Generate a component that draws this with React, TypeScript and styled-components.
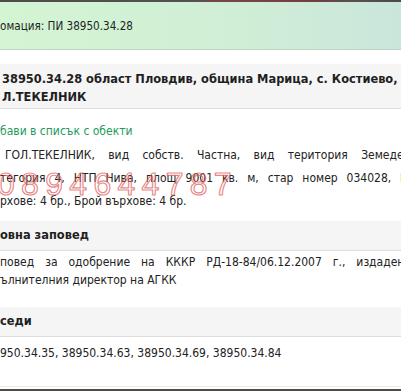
import React from "react";
import styled, { createGlobalStyle } from "styled-components";

const GlobalStyle = createGlobalStyle`
  html, body { margin: 0; padding: 0; background: #fff; overflow: hidden; }
  body { font-family: "DejaVu Sans Condensed", "Noto Sans", sans-serif; color: #1f1f1f; }
`;

const Frame = styled.div`
  position: relative;
  width: 401px;
  height: 391px;
  display: flex;
  flex-direction: column;
  overflow: hidden;
  background: #fff;
`;

const TopRule = styled.div`
  flex: none;
  height: 2px;
  background: linear-gradient(90deg, #514c4c 0%, #555050 48%, #7b4545 55%, #6e4040 80%, #585050 88%, #4e4a4a 100%);
`;

const Header = styled.header`
  flex: none;
  height: 47px;
  display: flex;
  align-items: center;
  background: linear-gradient(90deg, #d4f5d3 0%, #cfeed6 60%, #cae6dc 100%);
  border-bottom: 1px solid #bcd6c4;
  font-size: 11.6px;
  color: #222;
  white-space: nowrap;
`;

const Body = styled.main`
  flex: 1;
  display: flex;
  flex-direction: column;
  padding-top: 14px;
  font-size: 12px;
`;

const TitleBox = styled.div`
  padding: 6px 0 2px 2px;
  line-height: 18px;
  font-size: 12.7px;
  font-weight: bold;
  background: #f5f5f5;
  border-bottom: 1px solid #dedede;
  white-space: nowrap;
`;

const SectionBox = styled.div<{ $gap: number }>`
  margin-top: ${(p) => p.$gap}px;
  padding: 5px 0 6px;
  line-height: 18px;
  font-size: 12.7px;
  font-weight: bold;
  background: #f5f5f5;
  border-bottom: 1px solid #dedede;
  white-space: nowrap;
`;

const Link = styled.a`
  margin-top: 12px;
  line-height: 20px;
  color: #239a5c;
  text-decoration: none;
`;

const Para = styled.div<{ $gap: number; $lh: number }>`
  margin-top: ${(p) => p.$gap}px;
  line-height: ${(p) => p.$lh}px;
  color: #222;
`;

const JLine = styled.div<{ $w: number; $indent?: number }>`
  width: ${(p) => p.$w}px;
  padding-left: ${(p) => p.$indent ?? 0}px;
  text-align: justify;
  text-align-last: justify;
`;

const Line = styled.div`
  white-space: nowrap;
`;

const Watermark = styled.div`
  position: absolute;
  left: -3px;
  top: 166px;
  font-family: "Liberation Sans", Arial, sans-serif;
  font-size: 32px;
  letter-spacing: 6.3px;
  color: transparent;
  -webkit-text-stroke: 1.2px rgba(224, 96, 96, 0.75);
  pointer-events: none;
  white-space: nowrap;
`;

const BottomRule = styled.div`
  flex: none;
  margin-top: auto;
  height: 6px;
  background: linear-gradient(180deg, #fff 0 1px, #e6ebe8 1px 2px, #fff 2px 4px, #4f4b49 4px 6px);
`;

export default function App() {
  return (
    <>
      <GlobalStyle />
      <Frame>
        <TopRule />
        <Header>омация: ПИ 38950.34.28</Header>
        <Body>
          <TitleBox>
            <Line>38950.34.28 област Пловдив, община Марица, с. Костиево,</Line>
            <Line>Л.ТЕКЕЛНИК</Line>
          </TitleBox>
          <Link href="#">бави в списък с обекти</Link>
          <Para $gap={3} $lh={23}>
            <JLine $w={428} $indent={5}>ГОЛ.ТЕКЕЛНИК, вид собств. Частна, вид територия Земеделска,</JLine>
            <JLine $w={428}>тегория 4, НТП Нива, площ 9001 кв. м, стар номер 034028, Брой</JLine>
            <Line>рхове: 4 бр., Брой върхове: 4 бр.</Line>
          </Para>
          <SectionBox $gap={8}>овна заповед</SectionBox>
          <Para $gap={2} $lh={18}>
            <JLine $w={411}>повед за одобрение на КККР РД-18-84/06.12.2007 г., издадена</JLine>
            <Line>ълнителния директор на АГКК</Line>
          </Para>
          <SectionBox $gap={18}>седи</SectionBox>
          <Para $gap={7} $lh={18}>
            <Line>950.34.35, 38950.34.63, 38950.34.69, 38950.34.84</Line>
          </Para>
          <BottomRule />
        </Body>
        <Watermark>0894644787</Watermark>
      </Frame>
    </>
  );
}
